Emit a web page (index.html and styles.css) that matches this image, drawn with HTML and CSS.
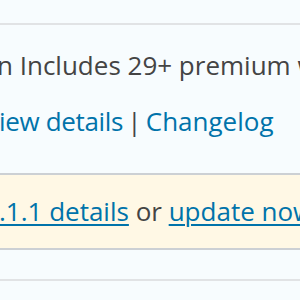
FILE: index.html
```html
<!DOCTYPE html>
<html>
<head>
<meta charset="utf-8">
<link rel="stylesheet" href="styles.css">
</head>
<body>
<div class="page">
  <div class="top"></div>
  <div class="sep sep-light"></div>
  <div class="desc">
    <p class="line line-desc">n Includes 29+ premium widgets</p>
    <p class="line line-meta"><a class="link tight" href="#">iew details</a> | <a class="link" href="#">Changelog</a></p>
  </div>
  <div class="sep sep-dark"></div>
  <div class="notice">
    <p class="line line-notice"><a class="link ul" href="#">.1.1 details</a> or <a class="link ul" href="#">update now</a>.</p>
  </div>
  <div class="sep sep-dark"></div>
  <div class="blank"></div>
  <div class="sep sep-light"></div>
  <div class="rest"></div>
</div>
</body>
</html>
```
FILE: styles.css
```css
html, body {
  margin: 0;
  padding: 0;
  background: #f7fcfe;
  overflow: hidden;
}
.page {
  width: 300px;
  height: 300px;
  overflow: hidden;
  font-family: "Open Sans", "Noto Sans", sans-serif;
  font-size: 26px;
  color: #444444;
}
.top {
  height: 23px;
}
.sep {
  height: 2px;
}
.sep-light {
  background: #e1e3e5;
}
.sep-dark {
  background: #ccd0d4;
}
.desc {
  padding: 21px 0 32px 0;
}
.line {
  margin: 0;
  line-height: 39px;
  white-space: nowrap;
}
.line-desc {
  margin-left: -3px;
}
.line-meta {
  margin-top: 17px;
  margin-left: -1px;
  word-spacing: -2.5px;
}
.tight {
  letter-spacing: -0.35px;
  word-spacing: 0;
}
.link {
  color: #0073aa;
  text-decoration: none;
}
.ul {
  text-decoration: underline;
  text-decoration-thickness: 2px;
  text-underline-offset: 3px;
}
.notice {
  background: #fff8e5;
  padding: 17px 0;
}
.line-notice {
  margin-left: -1px;
}
.blank {
  height: 29px;
}
.rest {
  height: 30px;
}
```
